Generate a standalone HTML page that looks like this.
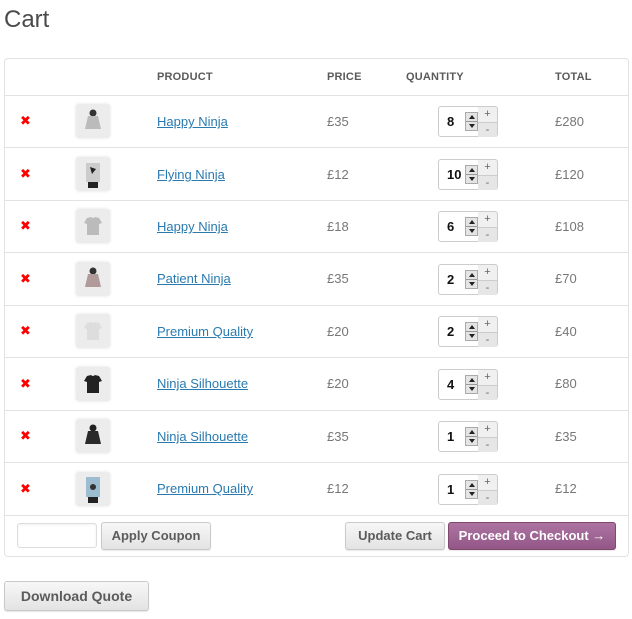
<!DOCTYPE html>
<html><head><meta charset="utf-8"><style>
*{box-sizing:border-box;margin:0;padding:0}
body{width:632px;height:619px;background:#fff;font-family:"Liberation Sans","DejaVu Sans",sans-serif;position:relative;overflow:hidden;color:#777}
.a{position:absolute}
h1{position:absolute;left:4px;top:6px;font-size:24px;font-weight:normal;color:#4a4a4a}
.tbl{position:absolute;left:4px;top:58px;width:625px;height:499px;border:1px solid #e2e2e2;border-radius:4px}
.hd{position:absolute;top:71px;font-size:11px;font-weight:bold;color:#5a5a5a;letter-spacing:.2px}
.line{position:absolute;left:5px;width:623px;height:1px;background:#e2e2e2}
.x{position:absolute;left:20px;color:#f00;font-size:13px;font-weight:bold}
.th{position:absolute;left:76px;width:34px;height:34px;background:#ececec;border-radius:3px;box-shadow:0 0 3px rgba(0,0,0,.12)}
.nm{position:absolute;left:157px;font-size:13px;color:#2a7ab0;text-decoration:underline}
.pr{position:absolute;left:327px;font-size:13px;color:#777}
.tt{position:absolute;left:555px;font-size:13px;color:#777}
.q{position:absolute;left:438px;width:41px;height:31px;border:1px solid #ccc;border-radius:3px 0 0 3px;background:#fff}
.q b{position:absolute;left:8px;top:7px;font-size:13px;color:#111}
.sp{position:absolute;left:26px;top:5px;width:13px;height:19px;border:1px solid #aaa;background:#e4e4e4}
.sp:before{content:"";position:absolute;left:3px;top:2px;border:3px solid transparent;border-bottom:4px solid #222;border-top:0}
.sp:after{content:"";position:absolute;left:3px;bottom:2px;border:3px solid transparent;border-top:4px solid #222;border-bottom:0}
.sp i{position:absolute;left:0;top:8px;width:11px;height:1px;background:#999}
.pm{position:absolute;left:478px;width:20px;height:31px;border:1px solid #ccc;border-left:0;border-radius:0 3px 3px 0;background:#f0f0f0;font-size:11px;color:#666;text-align:center}
.pm span{display:block;height:15px;line-height:14px}
.pm span+span{border-top:1px solid #ccc;background:#e6e6e6}
.btn{position:absolute;height:28px;border:1px solid #c9c9c9;border-radius:3px;background:linear-gradient(#f7f7f7,#e3e3e3);font-weight:bold;font-size:13px;color:#5b5b5b;text-align:center;line-height:26px;box-shadow:0 1px 1px rgba(0,0,0,.1)}
</style></head><body>
<h1>Cart</h1>
<div class="tbl"></div>
<div class="hd" style="left:157px">PRODUCT</div>
<div class="hd" style="left:327px">PRICE</div>
<div class="hd" style="left:406px">QUANTITY</div>
<div class="hd" style="left:555px">TOTAL</div>
<div class="line" style="top:95px"></div>
<div class="line" style="top:147px"></div>
<div class="line" style="top:200px"></div>
<div class="line" style="top:252px"></div>
<div class="line" style="top:305px"></div>
<div class="line" style="top:357px"></div>
<div class="line" style="top:410px"></div>
<div class="line" style="top:462px"></div>
<div class="line" style="top:515px"></div>

<div class="x" style="top:113px">✖</div>
<div class="th" style="top:104px"><svg width="34" height="34"><circle cx="17" cy="9" r="3.5" fill="#333"/><path d="M12 12h10l3 13h-16z" fill="#bbb"/></svg></div>
<div class="nm" style="top:114px">Happy Ninja</div><div class="pr" style="top:114px">£35</div>
<div class="q" style="top:106px"><b>8</b><div class="sp"><i></i></div></div><div class="pm" style="top:106px"><span>+</span><span>-</span></div>
<div class="tt" style="top:114px">£280</div>

<div class="x" style="top:166px">✖</div>
<div class="th" style="top:157px"><svg width="34" height="34"><rect x="10" y="6" width="14" height="19" fill="#ccc"/><path d="M14 10l6 2-4 5z" fill="#222"/><rect x="12" y="25" width="10" height="6" fill="#222"/></svg></div>
<div class="nm" style="top:167px">Flying Ninja</div><div class="pr" style="top:167px">£12</div>
<div class="q" style="top:159px"><b>10</b><div class="sp"><i></i></div></div><div class="pm" style="top:159px"><span>+</span><span>-</span></div>
<div class="tt" style="top:167px">£120</div>

<div class="x" style="top:218px">✖</div>
<div class="th" style="top:209px"><svg width="34" height="34"><path d="M11 9l4-1q2 2 4 0l4 1 3 5-3 1v11h-12v-11l-3-1z" fill="#bbb"/></svg></div>
<div class="nm" style="top:219px">Happy Ninja</div><div class="pr" style="top:219px">£18</div>
<div class="q" style="top:211px"><b>6</b><div class="sp"><i></i></div></div><div class="pm" style="top:211px"><span>+</span><span>-</span></div>
<div class="tt" style="top:219px">£108</div>

<div class="x" style="top:271px">✖</div>
<div class="th" style="top:262px"><svg width="34" height="34"><circle cx="17" cy="9" r="3.5" fill="#333"/><path d="M12 12h10l3 13h-16z" fill="#b09a9a"/></svg></div>
<div class="nm" style="top:271px">Patient Ninja</div><div class="pr" style="top:271px">£35</div>
<div class="q" style="top:264px"><b>2</b><div class="sp"><i></i></div></div><div class="pm" style="top:264px"><span>+</span><span>-</span></div>
<div class="tt" style="top:271px">£70</div>

<div class="x" style="top:323px">✖</div>
<div class="th" style="top:314px"><svg width="34" height="34"><path d="M11 9l4-1q2 2 4 0l4 1 3 5-3 1v11h-12v-11l-3-1z" fill="#ddd"/></svg></div>
<div class="nm" style="top:324px">Premium Quality</div><div class="pr" style="top:324px">£20</div>
<div class="q" style="top:316px"><b>2</b><div class="sp"><i></i></div></div><div class="pm" style="top:316px"><span>+</span><span>-</span></div>
<div class="tt" style="top:324px">£40</div>

<div class="x" style="top:376px">✖</div>
<div class="th" style="top:367px"><svg width="34" height="34"><path d="M11 9l4-1q2 2 4 0l4 1 3 5-3 1v11h-12v-11l-3-1z" fill="#222"/></svg></div>
<div class="nm" style="top:376px">Ninja Silhouette</div><div class="pr" style="top:376px">£20</div>
<div class="q" style="top:369px"><b>4</b><div class="sp"><i></i></div></div><div class="pm" style="top:369px"><span>+</span><span>-</span></div>
<div class="tt" style="top:376px">£80</div>

<div class="x" style="top:428px">✖</div>
<div class="th" style="top:419px"><svg width="34" height="34"><circle cx="17" cy="9" r="3.5" fill="#222"/><path d="M12 12h10l3 13h-16z" fill="#2a2a2a"/></svg></div>
<div class="nm" style="top:429px">Ninja Silhouette</div><div class="pr" style="top:429px">£35</div>
<div class="q" style="top:421px"><b>1</b><div class="sp"><i></i></div></div><div class="pm" style="top:421px"><span>+</span><span>-</span></div>
<div class="tt" style="top:429px">£35</div>

<div class="x" style="top:481px">✖</div>
<div class="th" style="top:472px"><svg width="34" height="34"><rect x="10" y="5" width="14" height="20" fill="#9cbcd0"/><circle cx="17" cy="15" r="3" fill="#333"/><rect x="12" y="25" width="10" height="6" fill="#222"/></svg></div>
<div class="nm" style="top:481px">Premium Quality</div><div class="pr" style="top:481px">£12</div>
<div class="q" style="top:474px"><b>1</b><div class="sp"><i></i></div></div><div class="pm" style="top:474px"><span>+</span><span>-</span></div>
<div class="tt" style="top:481px">£12</div>

<div class="a" style="left:17px;top:523px;width:80px;height:25px;border:1px solid #ddd;border-radius:3px;box-shadow:inset 0 1px 2px rgba(0,0,0,.06)"></div>
<div class="btn" style="left:101px;top:522px;width:110px">Apply Coupon</div>
<div class="btn" style="left:345px;top:522px;width:100px">Update Cart</div>
<div class="btn" style="left:448px;top:522px;width:168px;background:linear-gradient(#ad74a2,#935786);border-color:#80476f;color:#fff">Proceed to Checkout →</div>
<div class="btn" style="left:4px;top:581px;width:145px;height:30px;line-height:28px;font-size:14px">Download Quote</div>
</body></html>
